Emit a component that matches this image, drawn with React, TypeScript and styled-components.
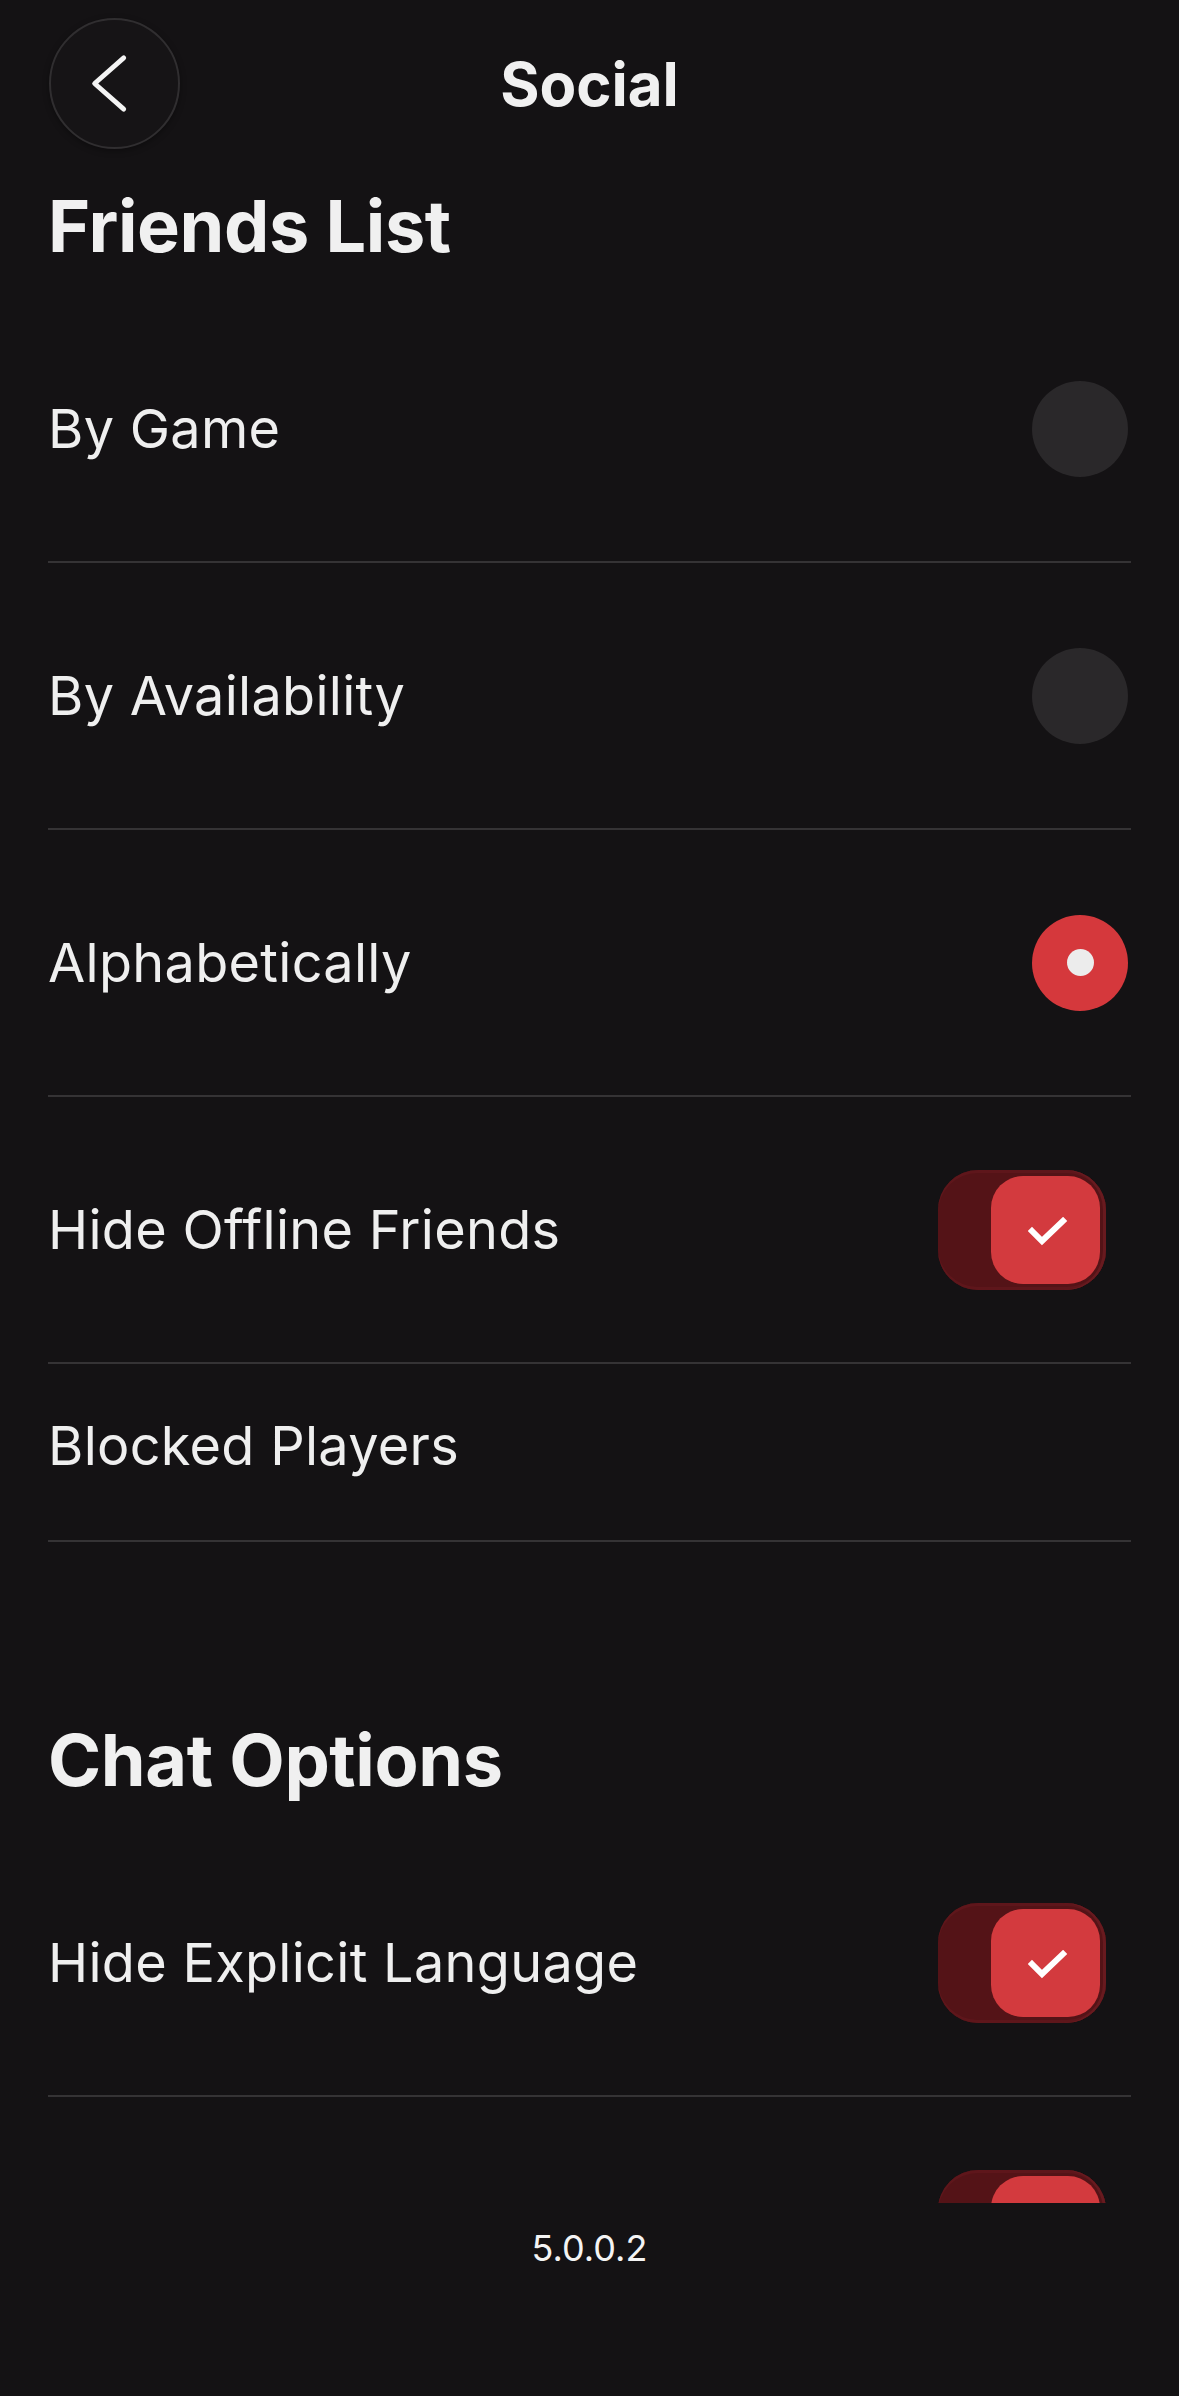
import React from "react";
import styled, { createGlobalStyle } from "styled-components";

const Global = createGlobalStyle`
  html, body {
    margin: 0;
    padding: 0;
    background: #141214;
  }
  body {
    font-family: Inter, "Noto Sans", sans-serif;
    color: #efefef;
    -webkit-font-smoothing: antialiased;
  }
  * { box-sizing: border-box; }
`;

const Screen = styled.div`
  width: 1179px;
  height: 2396px;
  display: flex;
  flex-direction: column;
  background: #141214;
  overflow: hidden;
`;

const Header = styled.header`
  flex: none;
  height: 168px;
  padding: 18px 49px 19px;
  display: grid;
  grid-template-columns: 1fr auto 1fr;
  align-items: center;
`;

const BackButton = styled.button`
  width: 131px;
  height: 131px;
  border-radius: 50%;
  border: 2px solid #302e30;
  background: #161416;
  box-shadow: 0 2px 6px rgba(0, 0, 0, 0.35);
  padding: 0;
  display: flex;
  align-items: center;
  justify-content: center;
  cursor: pointer;
  justify-self: start;
`;

const Title = styled.h1`
  margin: 0;
  font-size: 60px;
  line-height: 72px;
  font-weight: 700;
  color: #f0f0f0;
  text-align: center;
`;

const Scroll = styled.main`
  flex: none;
  height: 2035px;
  overflow: hidden;
  padding: 15px 48px 0;
`;

const SectionTitle = styled.h2<{ $first?: boolean }>`
  margin: ${(p) => (p.$first ? "0" : "175px")} 0 27px;
  font-size: 72px;
  line-height: 86px;
  font-weight: 700;
  letter-spacing: -0.4px;
  color: #f0f0f0;
`;

const List = styled.div`
  display: flex;
  flex-direction: column;
`;

const Row = styled.div<{ $compact?: boolean }>`
  height: ${(p) => (p.$compact ? "178px" : "267px")};
  border-bottom: 2px solid #353335;
  display: flex;
  align-items: center;
  justify-content: space-between;
  padding-bottom: ${(p) => (p.$compact ? "12px" : "0")};
`;

const Label = styled.span`
  font-size: 54px;
  line-height: 66px;
  font-weight: 400;
  letter-spacing: 0.3px;
  color: #efefef;
`;

const Radio = styled.span<{ $checked?: boolean }>`
  width: 96px;
  height: 96px;
  border-radius: 50%;
  margin-right: 3px;
  background: ${(p) => (p.$checked ? "#d5383c" : "#2a282a")};
  display: flex;
  align-items: center;
  justify-content: center;
`;

const RadioDot = styled.span`
  width: 27px;
  height: 27px;
  border-radius: 50%;
  background: #ececec;
`;

const Track = styled.span`
  width: 168px;
  height: 120px;
  margin-left: auto;
  margin-right: 25px;
  border-radius: 40px;
  background: #541317;
  box-shadow: inset -3px 0 0 #681a1f, inset 0 3px 0 #5e161b, inset 0 -3px 0 #5e161b;
  padding: 6px 6px 6px 53px;
  display: flex;
`;

const Knob = styled.span`
  width: 109px;
  height: 108px;
  border-radius: 32px;
  background: #d33a3e;
  display: flex;
  align-items: center;
  justify-content: center;
`;

const Footer = styled.footer`
  flex: 1;
  padding-top: 23px;
  text-align: center;
`;

const Version = styled.span`
  font-size: 36px;
  line-height: 44px;
  color: #f4f4f4;
`;

const ChevronLeft = () => (
  <svg width="131" height="131" viewBox="0 0 131 131" fill="none">
    <path
      d="M75 39 L45 65.5 L75 92"
      stroke="#f4f4f4"
      strokeWidth="5"
      strokeLinecap="round"
      strokeLinejoin="round"
    />
  </svg>
);

const Check = () => (
  <svg width="40" height="30" viewBox="0 0 40 30" fill="none" style={{ marginLeft: 4, marginTop: 4 }}>
    <path d="M4 14 L14 24 L35 4" stroke="#ffffff" strokeWidth="6" strokeLinecap="square" strokeLinejoin="miter" />
  </svg>
);

const Toggle = ({ label }: { label?: string }) => (
  <Track role="switch" aria-checked="true" aria-label={label}>
    <Knob>
      <Check />
    </Knob>
  </Track>
);

export default function App() {
  return (
    <Screen>
      <Global />
      <Header>
        <BackButton aria-label="Back">
          <ChevronLeft />
        </BackButton>
        <Title>Social</Title>
        <span />
      </Header>
      <Scroll>
        <SectionTitle $first>Friends List</SectionTitle>
        <List>
          <Row>
            <Label>By Game</Label>
            <Radio />
          </Row>
          <Row>
            <Label>By Availability</Label>
            <Radio />
          </Row>
          <Row>
            <Label>Alphabetically</Label>
            <Radio $checked>
              <RadioDot />
            </Radio>
          </Row>
          <Row>
            <Label>Hide Offline Friends</Label>
            <Toggle />
          </Row>
          <Row $compact>
            <Label>Blocked Players</Label>
          </Row>
        </List>
        <SectionTitle>Chat Options</SectionTitle>
        <List>
          <Row>
            <Label>Hide Explicit Language</Label>
            <Toggle />
          </Row>
          <Row>
            <Toggle label="Chat option" />
          </Row>
        </List>
      </Scroll>
      <Footer>
        <Version>5.0.0.2</Version>
      </Footer>
    </Screen>
  );
}
